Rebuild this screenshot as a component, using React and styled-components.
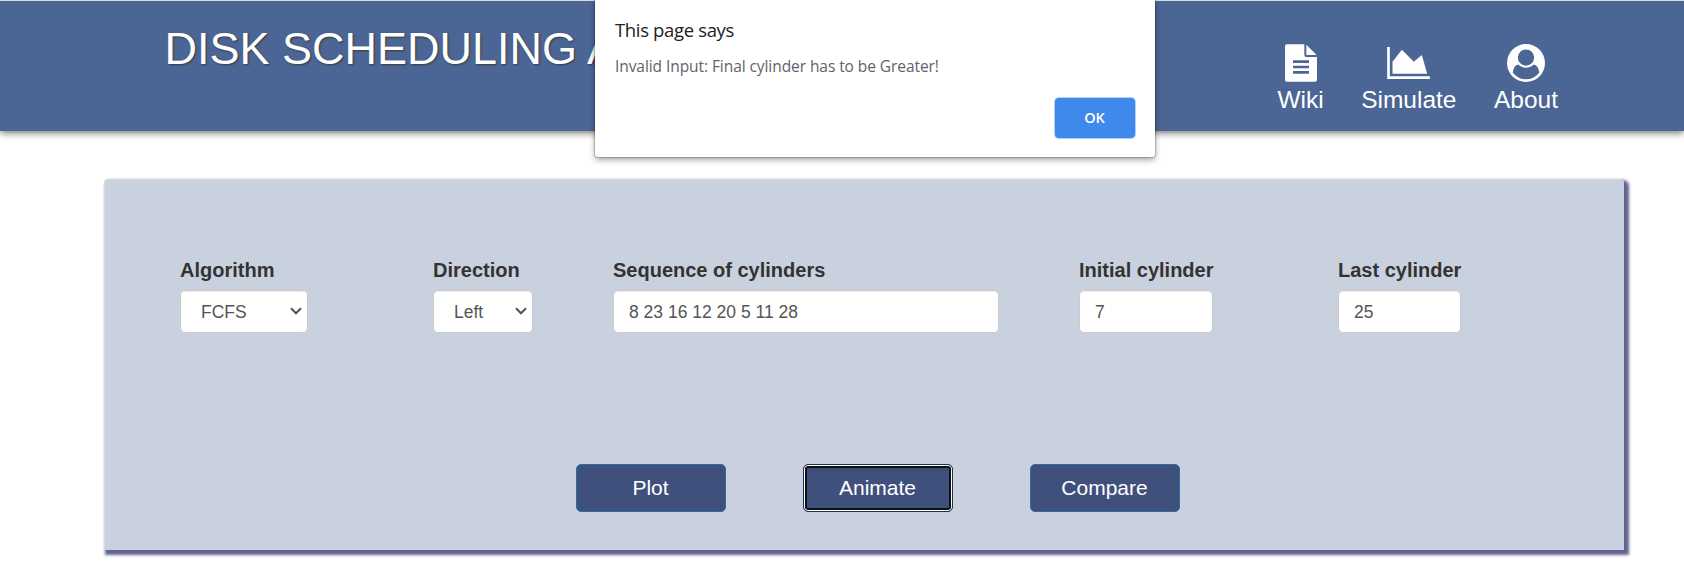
import React from 'react';
import styled, { createGlobalStyle } from 'styled-components';

const GlobalStyle = createGlobalStyle`
  *, *::before, *::after { box-sizing: border-box; }
  body {
    margin: 0;
    background: #fff;
    color: #333;
    font-family: "Liberation Sans", Arial, sans-serif;
    overflow: hidden;
  }
`;

const Page = styled.div`
  position: relative;
  height: 576px;
`;

const Header = styled.header`
  display: flex;
  justify-content: space-between;
  height: 131px;
  padding: 0 110px 0 164.5px;
  border-top: 1px solid #d9dbdf;
  background: #4b6595;
  color: #fff;
  box-shadow: 0 2px 7px rgba(0, 0, 0, 0.55);
`;

const Title = styled.h1`
  margin: 22px 0 0;
  font-size: 45px;
  font-weight: 400;
  line-height: 52px;
  white-space: nowrap;
  text-shadow: 1px 1px 2px #3c3c3c;
`;

const Nav = styled.nav`
  display: flex;
  align-items: flex-start;
  gap: 37.5px;
  padding: 43px 16px 0 0;
`;

const NavItem = styled.a`
  display: flex;
  flex-direction: column;
  align-items: center;
  color: #fff;
  font-size: 24.5px;
  line-height: 28px;
  text-decoration: none;
  svg { display: block; fill: currentColor; }
`;

const IconBox = styled.span`
  display: flex;
  align-items: center;
  justify-content: center;
  height: 38px;
  margin-bottom: 4px;
`;

const Panel = styled.main`
  width: 1520px;
  height: 371px;
  margin: 48px 0 0 104px;
  padding: 79px 76px 0;
  border-radius: 4px 4px 0 0;
  background: #cad1de;
  box-shadow: inset 1px 1px 0 #d6dae4, 3px 3px 3px 2px #62628e;
`;

const Fields = styled.div`
  display: flex;
`;

const Field = styled.div`
  display: flex;
  flex-direction: column;
  width: ${(p) => p.$width}px;
  margin-right: ${(p) => p.$after || 0}px;
`;

const Label = styled.label`
  margin-bottom: 8px;
  font-size: 20px;
  font-weight: 700;
  line-height: 24px;
  white-space: nowrap;
`;

const Input = styled.input`
  width: 100%;
  height: 43px;
  padding: 1px 15px 0;
  border: 1px solid #ccc;
  border-radius: 5px;
  outline: none;
  background: #fff;
  color: #555;
  font: 17.5px "Liberation Sans", Arial, sans-serif;
  box-shadow: inset 0 1px 1px rgba(0, 0, 0, 0.075);
`;

const SelectWrap = styled.div`
  position: relative;
  svg {
    position: absolute;
    right: 6px;
    top: 17px;
    pointer-events: none;
  }
`;

const Select = styled(Input).attrs({ as: 'select' })`
  display: block;
  padding: 1px 20px 0;
  appearance: none;
`;

const Actions = styled.div`
  display: flex;
  justify-content: center;
  gap: 77px;
  margin-top: 131px;
  padding-left: 28px;
`;

const ActionButton = styled.button`
  width: 150px;
  height: 48px;
  padding: 0 1px 1px 0;
  border: 1px solid ${(p) => (p.$focused ? '#1c3350' : '#2e6da4')};
  border-radius: 5px;
  background: #40507c;
  color: #fff;
  font: 21px "Liberation Sans", Arial, sans-serif;
  box-shadow: ${(p) =>
    p.$focused
      ? 'inset 0 0 0 1px #fff, inset 0 0 0 3px #101010, inset 0 4px 5px rgba(0, 0, 0, 0.125)'
      : 'none'};
`;

const Dialog = styled.div`
  position: absolute;
  top: 0;
  left: 595px;
  display: flex;
  flex-direction: column;
  width: 560px;
  height: 157px;
  padding: 18px 20px 19px;
  border-radius: 0 0 3px 3px;
  background: #fff;
  font-family: "Open Sans", "Noto Sans", sans-serif;
  box-shadow: 0 0 1px 1px rgba(0, 0, 0, 0.2), 0 3px 6px rgba(0, 0, 0, 0.35);
`;

const DialogTitle = styled.div`
  color: #202124;
  font-size: 18.5px;
  line-height: 24px;
  letter-spacing: -0.35px;
`;

const DialogText = styled.div`
  margin-top: 14px;
  color: #5f6368;
  font-size: 15.5px;
  line-height: 20px;
  letter-spacing: -0.07px;
  white-space: nowrap;
`;

const OkButton = styled.button`
  align-self: flex-end;
  width: 80px;
  height: 40px;
  margin-top: 22px;
  padding: 0 1px 2px 0;
  border: 0;
  border-radius: 4px;
  background: #4089ec;
  color: #fff;
  font: 600 14.5px "Open Sans", "Noto Sans", sans-serif;
  box-shadow: 0 0 0 1px #b3d0f8;
`;

const FileIcon = () => (
  <svg width="32" height="38" viewBox="0 0 1536 1792">
    <path
      fillRule="evenodd"
      d="M96 0H928V512Q928 608 1024 608H1536V1696Q1536 1792 1440 1792H96Q0 1792 0 1696V96Q0 0 96 0ZM384 768V896H1152V768ZM384 1024V1152H1152V1024ZM384 1280V1408H1152V1280Z"
    />
    <path d="M1024 30Q1050 45 1070 65L1471 466Q1495 490 1506 512H1024Z" />
  </svg>
);

const ChartIcon = () => (
  <svg width="43" height="32" viewBox="0 128 2048 1536">
    <path d="M2048 1536v128h-2048v-1536h128v1408h1920zM1664 512l256 896h-1664v-576l448-576 576 576z" />
  </svg>
);

const UserIcon = () => (
  <svg width="38" height="38" viewBox="0 0 1792 1792">
    <path
      fillRule="evenodd"
      d="M1523 1339q-22-155-87.5-257.5t-184.5-118.5q-67 74-159.5 115.5t-195.5 41.5-195.5-41.5-159.5-115.5q-119 16-184.5 118.5t-87.5 257.5q106 150 271 237.5t356 87.5 356-87.5 271-237.5zM1280 640q0-159-112.5-271.5t-271.5-112.5-271.5 112.5-112.5 271.5 112.5 271.5 271.5 112.5 271.5-112.5 112.5-271.5zM1792 896A896 896 0 1 1 0 896A896 896 0 1 1 1792 896z"
    />
  </svg>
);

const Chevron = () => (
  <svg width="12" height="8" viewBox="0 0 12 8" fill="none" stroke="#555" strokeWidth="2.1">
    <path d="M1 1.3L6 6.2L11 1.3" />
  </svg>
);

const navItems = [
  { label: 'Wiki', Icon: FileIcon },
  { label: 'Simulate', Icon: ChartIcon },
  { label: 'About', Icon: UserIcon },
];

const fields = [
  { label: 'Algorithm', width: 128, after: 125, value: 'FCFS', select: true },
  { label: 'Direction', width: 100, after: 80, value: 'Left', select: true },
  { label: 'Sequence of cylinders', width: 386, after: 80, value: '8 23 16 12 20 5 11 28' },
  { label: 'Initial cylinder', width: 134, after: 125, value: '7' },
  { label: 'Last cylinder', width: 123, value: '25' },
];

export default function App() {
  return (
    <Page>
      <GlobalStyle />
      <Header>
        <Title>DISK SCHEDULING A</Title>
        <Nav>
          {navItems.map(({ label, Icon }) => (
            <NavItem key={label}>
              <IconBox><Icon /></IconBox>
              {label}
            </NavItem>
          ))}
        </Nav>
      </Header>
      <Panel>
        <Fields>
          {fields.map((f) => (
            <Field key={f.label} $width={f.width} $after={f.after}>
              <Label>{f.label}</Label>
              {f.select ? (
                <SelectWrap>
                  <Select defaultValue={f.value}>
                    <option>{f.value}</option>
                  </Select>
                  <Chevron />
                </SelectWrap>
              ) : (
                <Input defaultValue={f.value} />
              )}
            </Field>
          ))}
        </Fields>
        <Actions>
          <ActionButton>Plot</ActionButton>
          <ActionButton $focused>Animate</ActionButton>
          <ActionButton>Compare</ActionButton>
        </Actions>
      </Panel>
      <Dialog role="alertdialog">
        <DialogTitle>This page says</DialogTitle>
        <DialogText>Invalid Input: Final cylinder has to be Greater!</DialogText>
        <OkButton>OK</OkButton>
      </Dialog>
    </Page>
  );
}
